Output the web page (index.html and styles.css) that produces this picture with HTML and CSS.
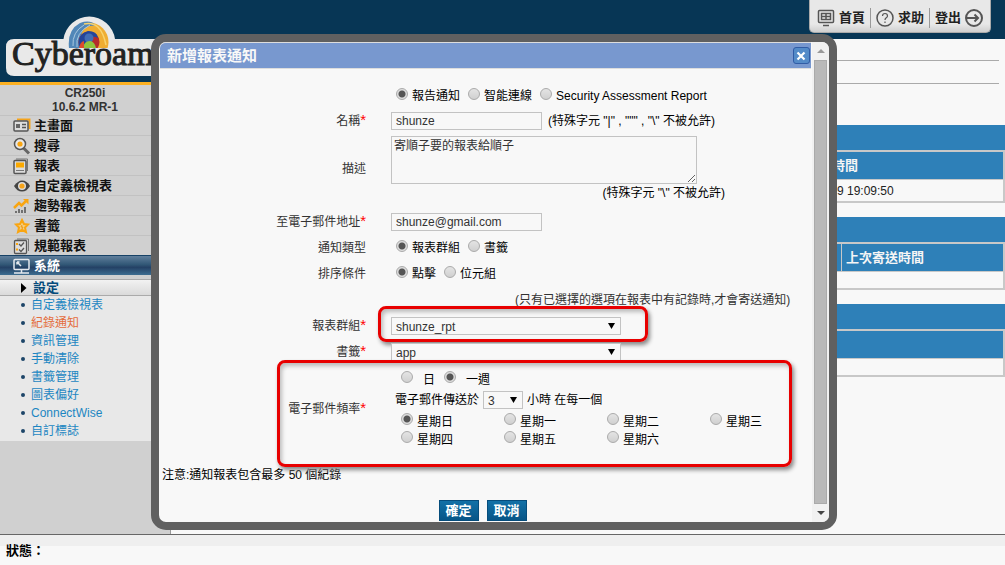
FILE: index.html
```html
<!DOCTYPE html>
<html lang="zh-Hant">
<head>
<meta charset="utf-8">
<title>Cyberoam</title>
<link rel="stylesheet" href="styles.css">
</head>
<body>
<div class="shell">
  <aside class="sidebar">
    <div class="brand">
      <svg class="logo" width="170" height="82" viewBox="0 0 170 82" role="img" aria-label="Cyberoam">
        <path d="M14 39H63.5A26 26 0 0 1 115 39H170V76H14Q6 76 6 68V47Q6 39 14 39Z" fill="#e9e9e9"/>
        <clipPath id="top"><rect x="60" y="15" width="60" height="33"/></clipPath>
        <g clip-path="url(#top)">
          <circle cx="89" cy="42" r="19.500" fill="#efad32"/>
          <path d="M69 48Q67 30 80 23Q91 19 96 26Q84 24 81 35L80 49Z" fill="#5187b8"/>
          <path d="M73 46Q72 32 84 25M77 47Q75 33 90 25" stroke="#a9c8df" stroke-width="1" fill="none"/>
          <path d="M84 24Q101 20 106 45" stroke="#f8d36c" stroke-width="1.500" fill="none"/>
          <circle cx="89" cy="42" r="10.500" fill="#b52b2b"/>
          <path d="M79 46Q77 34 88 31Q97 31 98 38Q88 33 85 47Z" fill="#24459a"/>
          <circle cx="89" cy="38" r="4.500" fill="#416db5"/>
          <path d="M83 48Q84 41 90 41Q95 42 96 48Z" fill="#8fc43d"/>
          <path d="M79 48Q80 42 84 41L84 48Z" fill="#dc4b2c"/>
        </g>
        <text x="12" y="65" class="logo-text">Cyberoam</text>
      </svg>
    </div>
    <div class="device"><div>CR250i</div><div>10.6.2 MR-1</div></div>
    <nav class="menu">
      <a href="#"><svg width="18" height="18" viewBox="0 0 18 18" fill="none"><path d="M4 2.500H16.500V12" stroke="#f5a31a" stroke-width="2"/><rect x="1" y="4" width="14" height="10" rx="1" fill="#ddd" stroke="#555" stroke-width="1.500"/><path d="M3 7H7V11H3Z" fill="#666"/><path d="M9 7.500H13M9 10.500H13" stroke="#555" stroke-width="1.500"/></svg>主畫面</a>
      <a href="#"><svg width="18" height="18" viewBox="0 0 18 18" fill="none"><path d="M10.500 11L16 16.500" stroke="#666" stroke-width="3"/><circle cx="7" cy="7" r="5.500" fill="#e8e8e8" stroke="#555" stroke-width="1.500"/><circle cx="7" cy="7" r="2.600" fill="#f9a511"/></svg>搜尋</a>
      <a href="#"><svg width="18" height="18" viewBox="0 0 18 18" fill="none"><path d="M3 2H14.500V14" stroke="#777"/><rect x="1" y="3.500" width="12" height="13" rx="1" fill="#ddd" stroke="#555" stroke-width="1.500"/><rect x="3" y="5.500" width="8" height="5" fill="#fba900"/><path d="M3 13.500H11" stroke="#777"/></svg>報表</a>
      <a href="#"><svg width="18" height="18" viewBox="0 0 18 18" fill="none"><path d="M1 9Q5 3.500 9 3.500Q14 3.500 17 9Q14 14.500 9 14.500Q4 14.500 1 9Z" fill="#444"/><circle cx="9" cy="9" r="4" fill="#ddd"/><circle cx="9" cy="9" r="2.600" fill="#f5a31a"/></svg>自定義檢視表</a>
      <a href="#"><svg width="18" height="18" viewBox="0 0 18 18" fill="none"><path d="M1 11L6 6L8.500 8.500L13 4" stroke="#f9a511" stroke-width="2.500"/><path d="M10 2H15.500V7.500Z" fill="#f9a511"/><path d="M3 16V14M6 16V12M9 16V13M12 16V10" stroke="#666" stroke-width="1.800"/></svg>趨勢報表</a>
      <a href="#"><svg width="18" height="18" viewBox="0 0 18 18" fill="none"><path d="M9 3L11 7L15 7.500L12 10.500L13 15L9 12.800L5 15L6 10.500L3 7.500L7 7Z" fill="#f3ce84" stroke="#f9a511" stroke-width="2"/><path d="M9 8L8 10L10 10L9 12" stroke="#f09810"/></svg>書籤</a>
      <a href="#"><svg width="18" height="18" viewBox="0 0 18 18" fill="none"><path d="M4 2H15.500V14" stroke="#777"/><rect x="1.500" y="3.500" width="12" height="13" rx="1" fill="#ddd" stroke="#555" stroke-width="1.300"/><path d="M3 7H5M3 12.500H5" stroke="#f9a511" stroke-width="2"/><path d="M6 7L8 9L11 5.500M6 12.500L8 14.500L11 11" stroke="#555" stroke-width="1.300"/></svg>規範報表</a>
      <a href="#" class="active"><svg width="18" height="18" viewBox="0 0 18 18" fill="none" stroke="#e5e9ee" stroke-width="1.500"><rect x="1" y="2.500" width="15" height="10" rx="1"/><path d="M8.500 13V16M1 16H16M4 5L8 9M4 5H6.500M4 5V7.500"/></svg>系統</a>
    </nav>
    <a href="#" class="subhead"><svg width="6" height="10" viewBox="0 0 6 10"><path d="M0 0L5.500 5L0 10Z" fill="#000"/></svg>設定</a>
    <ul class="submenu">
      <li><a href="#">自定義檢視表</a></li>
      <li><a href="#" class="current">紀錄通知</a></li>
      <li><a href="#">資訊管理</a></li>
      <li><a href="#">手動清除</a></li>
      <li><a href="#">書籤管理</a></li>
      <li><a href="#">圖表偏好</a></li>
      <li><a href="#">ConnectWise</a></li>
      <li><a href="#">自訂標誌</a></li>
    </ul>
  </aside>
  <main class="main">
    <header class="topbar">
      <nav class="tools">
        <a href="#"><svg width="18" height="18" viewBox="0 0 18 18" fill="none" stroke="#555" stroke-width="1.500"><rect x="1.500" y="1.500" width="15" height="12" rx="1"/><path d="M4.500 4.500H13.500V10.500H4.500ZM9 4.500V10.500M4.500 7.500H13.500M6 16.500H12"/></svg>首頁</a>
        <a href="#"><svg width="18" height="18" viewBox="0 0 18 18" fill="none" stroke="#555" stroke-width="1.500"><circle cx="9" cy="9" r="8"/><path d="M6.500 7Q6.500 4.500 9 4.500Q11.500 4.500 11.500 7Q11.500 8 10 9Q9 9.700 9 11M9 12.500V14" stroke-width="1.200"/></svg>求助</a>
        <a href="#">登出<svg width="18" height="18" viewBox="0 0 18 18" fill="none" stroke="#555" stroke-width="2"><circle cx="9" cy="9" r="8"/><path d="M2 9H13M9.500 5.500L13 9L9.500 12.500"/></svg></a>
      </nav>
    </header>
    <section class="content">
      <hr><hr>
      <div class="panel">
        <div class="panel-bar"></div>
        <table class="grid"><tr><th></th><th class="time">時間</th></tr><tr class="tall"><td></td><td class="stamp">9 19:09:50</td></tr></table>
      </div>
      <div class="panel">
        <div class="panel-bar"></div>
        <table class="grid"><tr><th></th><th class="last">上次寄送時間</th></tr><tr><td colspan="2"></td></tr></table>
      </div>
      <div class="panel">
        <div class="panel-bar"></div>
        <table class="grid"><tr><th></th></tr><tr><td></td></tr></table>
      </div>
    </section>
  </main>
</div>
<footer class="status">狀態：</footer>

<div class="dialog" role="dialog" aria-labelledby="dialog-title">
  <div class="dialog-body">
    <header class="dialog-head">
      <h1 id="dialog-title">新增報表通知</h1>
      <button type="button" class="close" aria-label="關閉"><svg width="16" height="16" viewBox="0 0 16 16"><path d="M4.500 4.500L11.500 11.500M11.500 4.500L4.500 11.500" stroke="#fff" stroke-width="2.200"/></svg></button>
    </header>
    <form class="form">
      <div class="row">
        <span></span>
        <div class="options">
          <label><input type="radio" name="kind" checked>報告通知</label>
          <label><input type="radio" name="kind">智能連線</label>
          <label><input type="radio" name="kind">Security Assessment Report</label>
        </div>
      </div>
      <div class="row title">
        <label class="name" for="f-name">名稱<b>*</b></label>
        <div class="field"><input class="text" id="f-name" type="text" value="shunze"><span>(特殊字元 "|" , """ , "\" 不被允許)</span></div>
      </div>
      <div class="row describe">
        <label class="name" for="f-desc">描述</label>
        <div class="stack"><textarea id="f-desc">寄順子要的報表給順子</textarea><span class="hint">(特殊字元 "\" 不被允許)</span></div>
      </div>
      <div class="row">
        <label class="name" for="f-mail">至電子郵件地址<b>*</b></label>
        <div class="field"><input class="text" id="f-mail" type="text" value="shunze@gmail.com"></div>
      </div>
      <div class="row">
        <span class="name">通知類型</span>
        <div class="options">
          <label><input type="radio" name="type" checked>報表群組</label>
          <label><input type="radio" name="type">書籤</label>
        </div>
      </div>
      <div class="row">
        <span class="name">排序條件</span>
        <div class="options">
          <label><input type="radio" name="sort" checked>點擊</label>
          <label><input type="radio" name="sort">位元組</label>
        </div>
      </div>
      <div class="row"><span></span><span class="remark">(只有已選擇的選項在報表中有記錄時,才會寄送通知)</span></div>
      <div class="row">
        <label class="name" for="f-group">報表群組<b>*</b></label>
        <div class="field"><select id="f-group"><option>shunze_rpt</option></select></div>
        <i class="mark mark-group"></i>
      </div>
      <div class="row">
        <label class="name" for="f-book">書籤<b>*</b></label>
        <div class="field"><select id="f-book"><option>app</option></select></div>
      </div>
      <div class="row schedule">
        <span class="name">電子郵件頻率<b>*</b></span>
        <div class="stack">
          <div class="period">
            <label><input type="radio" name="period">日</label>
            <label><input type="radio" name="period" checked>一週</label>
          </div>
          <div class="hour"><label for="f-hour">電子郵件傳送於</label><select id="f-hour"><option>3</option></select><span>小時 在每一個</span></div>
          <div class="days">
            <label><input type="radio" name="day" checked>星期日</label>
            <label><input type="radio" name="day">星期一</label>
            <label><input type="radio" name="day">星期二</label>
            <label><input type="radio" name="day">星期三</label>
            <label><input type="radio" name="day">星期四</label>
            <label><input type="radio" name="day">星期五</label>
            <label><input type="radio" name="day">星期六</label>
          </div>
        </div>
        <i class="mark mark-schedule"></i>
      </div>
      <p class="notice">注意:通知報表包含最多 50 個紀錄</p>
      <div class="actions"><button type="button">確定</button><button type="button">取消</button></div>
    </form>
  </div>
  <div class="scroll">
    <svg width="8" height="4" viewBox="0 0 8 4"><path d="M0 4L4 0L8 4Z" fill="#999"/></svg>
    <div class="thumb"></div>
    <svg width="8" height="4" viewBox="0 0 8 4"><path d="M0 0L4 4L8 0Z" fill="#444"/></svg>
  </div>
</div>
</body>
</html>
```

FILE: styles.css
```css
* { box-sizing: border-box; }
body {
  margin: 0;
  min-height: 100vh;
  display: flex;
  flex-direction: column;
  position: relative;
  background: #f8f8f8;
  color: #000;
  font: 12px/18px "Liberation Sans", "Noto Sans CJK TC", sans-serif;
}
a { color: inherit; text-decoration: none; }
button, input, select, textarea { font: inherit; color: #333; margin: 0; }
svg { display: block; flex: none; }

.shell { flex: 1; display: flex; }
.sidebar { width: 171px; flex: none; background: #d0d0d0; border-right: 1px solid #999; }
.brand { background: #073655; border-bottom: 3px solid #fcb022; margin-right: -1px; }
.logo-text { font: 34px "Liberation Serif", serif; fill: #222; stroke: #222; stroke-width: 1px; }
.device { height: 30px; padding-top: 1px; text-align: center; font-weight: bold; line-height: 14px; color: #333; }
.menu a {
  display: flex;
  align-items: center;
  gap: 3px;
  height: 20px;
  padding-left: 13px;
  border-top: 1px solid #c2c2c2;
  font-size: 13px;
  font-weight: bold;
  color: #111;
}
.menu .active { background: linear-gradient(#607f9c, #315776 45%, #244165 60%, #3d6d90); color: #fff; border-color: #174266; }
.subhead {
  display: flex;
  align-items: center;
  gap: 6px;
  height: 17px;
  margin-top: 4px;
  padding-left: 21px;
  border: solid #aaa;
  border-width: 1px 0;
  background: linear-gradient(#f2f2f2, #dadada);
  color: #064b7b;
  font-size: 13px;
  font-weight: bold;
}
.submenu { margin: 0; padding: 0 0 1px; list-style: none; background: #e8e8e8; color: #1c86c2; }
.submenu li { display: flex; align-items: center; gap: 6px; height: 18px; padding-left: 21px; }
.submenu li::before { content: ""; width: 4px; height: 4px; border-radius: 2px; background: #1d4568; }
.submenu .current { color: #e46c3c; }

.main { flex: 1; min-width: 0; }
.topbar { height: 39px; padding-right: 14px; background: #073655; display: flex; justify-content: flex-end; align-items: flex-start; }
.tools {
  display: flex;
  align-items: center;
  height: 33px;
  padding: 4px 2px 0;
  border: solid #aaa;
  border-width: 0 1px 1px;
  border-radius: 0 0 5px 5px;
  background: linear-gradient(#e8e8e8 75%, #cfcfcf);
  font-size: 13px;
  font-weight: bold;
  color: #222;
}
.tools a { display: flex; align-items: center; gap: 4px; height: 20px; padding: 0 5px; }
.tools a + a { border-left: 1px solid #999; }
.content { display: flow-root; }
.content hr { height: 1px; margin: 21px 6px 22px 0; border: 0; background: #aaa; }
.content hr + hr { margin-bottom: 41px; }
.panel { margin-bottom: 14px; }
.panel-bar { height: 25px; background: #2e80b8; }
.grid { width: 100%; table-layout: fixed; border-collapse: separate; border-spacing: 0; border: 2px solid #c8c8c8; }
.grid th { height: 28px; padding: 0 0 0 4px; background: #2e80b8; border-bottom: 1px solid #c8c8c8; color: #f5f5f5; font-size: 13px; text-align: left; }
.grid td { height: 16px; padding: 0; }
.grid .tall td { height: 21px; }
.grid .time { width: 175px; }
.grid .last { width: 162px; border-left: 1px solid #c8c8c8; }
.grid .stamp { padding-left: 9px; color: #222; }
.status { height: 31px; padding: 7px 6px 0; border-top: 1px solid #666; background: linear-gradient(#efefef 11px, #f8f8f8 11px); font-size: 13px; font-weight: bold; }

.dialog {
  position: absolute;
  top: 34px;
  left: 151px;
  right: 168px;
  display: flex;
  border: 8px solid #606060;
  border-radius: 15px;
  background: #f8f8f8;
  overflow: hidden;
}
.dialog-body { flex: 1; min-width: 0; padding: 0 1px; }
.dialog-head {
  display: flex;
  align-items: center;
  justify-content: space-between;
  height: 27px;
  padding: 0 1px 0 7px;
  border: solid #ddd;
  border-width: 1px 0;
  border-radius: 6px 0 0 0;
  background: #7898cf;
  color: #f8f8f8;
}
.dialog-head h1 { margin: 0; font-size: 15px; line-height: 24px; }
.close { width: 17px; height: 17px; padding: 0; border: 1px solid #315ca5; border-radius: 3px; background: #548bc8; }
.close svg { margin: -1px; }

.form { padding-top: 14px; }
.row { display: grid; grid-template-columns: 206px 1fr; column-gap: 25px; align-items: center; height: 26px; position: relative; }
.title { height: 24px; }
.name { text-align: right; color: #333; white-space: nowrap; }
.name b { color: #f00; font-size: 15px; line-height: 12px; font-weight: normal; }
.options, .field, .period, .hour { display: flex; align-items: center; white-space: nowrap; }
.options { gap: 8px; padding-left: 5px; }
.options label, .days label { display: flex; align-items: center; gap: 4px; }
.field { gap: 6px; }
.stack { display: flex; flex-direction: column; align-items: flex-start; }
.describe { height: 76px; padding-bottom: 5px; }
input[type="radio"] {
  appearance: none;
  flex: none;
  width: 12px;
  height: 12px;
  margin-bottom: 5px;
  border: 1px solid #aaa;
  border-radius: 50%;
  background: linear-gradient(#e4e4e4, #d0d0d0);
}
input[type="radio"]:checked { background: radial-gradient(#555 3px, #ddd 4px); }
.text { width: 151px; height: 18px; padding: 0 4px; border: 1px solid #c3c3c3; background: #f8f8f8; }
textarea { display: block; width: 306px; height: 48px; padding: 0 2px; border: 1px solid #c3c3c3; background: #f8f8f8; resize: both; }
.hint { width: 334px; text-align: right; }
.remark { padding-left: 124px; color: #333; white-space: nowrap; }
select {
  appearance: none;
  width: 230px;
  height: 18px;
  padding: 0 4px;
  border: 1px solid #c3c3c3;
  border-radius: 0;
  background: #f8f8f8 url("data:image/svg+xml,%3Csvg xmlns='http://www.w3.org/2000/svg' width='7' height='6'%3E%3Cpath d='M0 0H7L3.500 6Z'/%3E%3C/svg%3E") no-repeat right 5px center;
}
.schedule { height: 88px; }
.schedule .stack { padding-left: 4px; }
.period { gap: 9px; height: 20px; padding-left: 6px; }
.period label { display: flex; align-items: center; gap: 10px; }
.hour { gap: 4px; height: 20px; }
.hour select { width: 40px; }
.days { display: grid; grid-template-columns: repeat(4, 103px); padding: 3px 0 0 6px; }
.mark { position: absolute; border: 3px solid #e80000; border-radius: 8px; box-shadow: 2px 3px 4px #888, inset 2px 3px 4px #bbb; pointer-events: none; }
.mark-group { left: 218px; width: 270px; top: -7px; height: 36px; }
.mark-schedule { left: 117px; width: 515px; top: -5px; height: 107px; }
.notice { margin: 13px 0 16px 2px; }
.actions { display: flex; justify-content: center; gap: 8px; padding: 0 6px 1px 0; }
.actions button { width: 40px; height: 21px; padding: 0; border: 1px solid #064d7c; background: linear-gradient(#1271a7, #075587); color: #fff; font-size: 13px; line-height: 19px; font-weight: bold; }

.scroll { width: 17px; display: flex; flex-direction: column; align-items: center; gap: 7px; padding: 7px 0; background: #f1f1f1; }
.thumb { flex: 1; width: 13px; border: 1px solid #aaa; background: #b9b9b9; }
```
